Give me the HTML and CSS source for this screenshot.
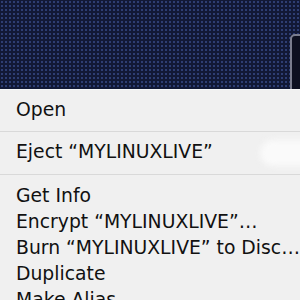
FILE: index.html
```html
<!DOCTYPE html>
<html lang="en">
<head>
    <meta charset="UTF-8">
    <meta name="viewport" content="width=device-width, initial-scale=1.0">
    <title>Context Menu</title>
    <link rel="stylesheet" href="styles.css">
</head>
<body>

    <div class="screen">
        <div class="desktop">
            <div class="window"></div>
        </div>

        <div class="menu">
            <div class="section first">
                <div class="item">Open</div>
            </div>
            <div class="section">
                <div class="item">Eject “MYLINUXLIVE”</div>
                <div class="glow"></div>
            </div>
            <div class="section last">
                <div class="item">Get Info</div>
                <div class="item">Encrypt “MYLINUXLIVE”…</div>
                <div class="item">Burn “MYLINUXLIVE” to Disc…</div>
                <div class="item">Duplicate</div>
                <div class="item">Make Alias</div>
            </div>
        </div>
    </div>

</body>
</html>
```

FILE: styles.css
```css
body {
    margin: 0;
    font-family: "DejaVu Sans", sans-serif;
    background-color: #131936;
}
.screen {
    width: 300px;
    height: 300px;
    overflow: hidden;
    position: relative;
}
.desktop {
    height: 89px;
    background-color: #121835;
    background-image: radial-gradient(circle, #2e3d72 0.9px, transparent 1.5px);
    background-size: 4px 4px;
}
.window {
    position: absolute;
    left: 290px;
    top: 34px;
    width: 40px;
    height: 80px;
    border: 2px solid #7b7d8e;
    border-radius: 5px;
    background-color: #0e1020;
}
.menu {
    position: relative;
    background-color: #f0f0f0;
    border-top: 1px solid #f7f7f7;
    color: #111;
    font-size: 18.8px;
}
.section {
    position: relative;
    padding: 7px 0 9px;
    border-bottom: 1px solid #d9d9d9;
}
.section.first {
    padding-bottom: 8px;
}
.section.last {
    border-bottom: none;
    padding-top: 8px;
}
.item {
    height: 26px;
    line-height: 26px;
    padding-left: 16px;
    white-space: nowrap;
}
.glow {
    position: absolute;
    right: -20px;
    top: 8px;
    width: 60px;
    height: 26px;
    border-radius: 13px;
    background-color: #fafafa;
    filter: blur(3px);
}
```
